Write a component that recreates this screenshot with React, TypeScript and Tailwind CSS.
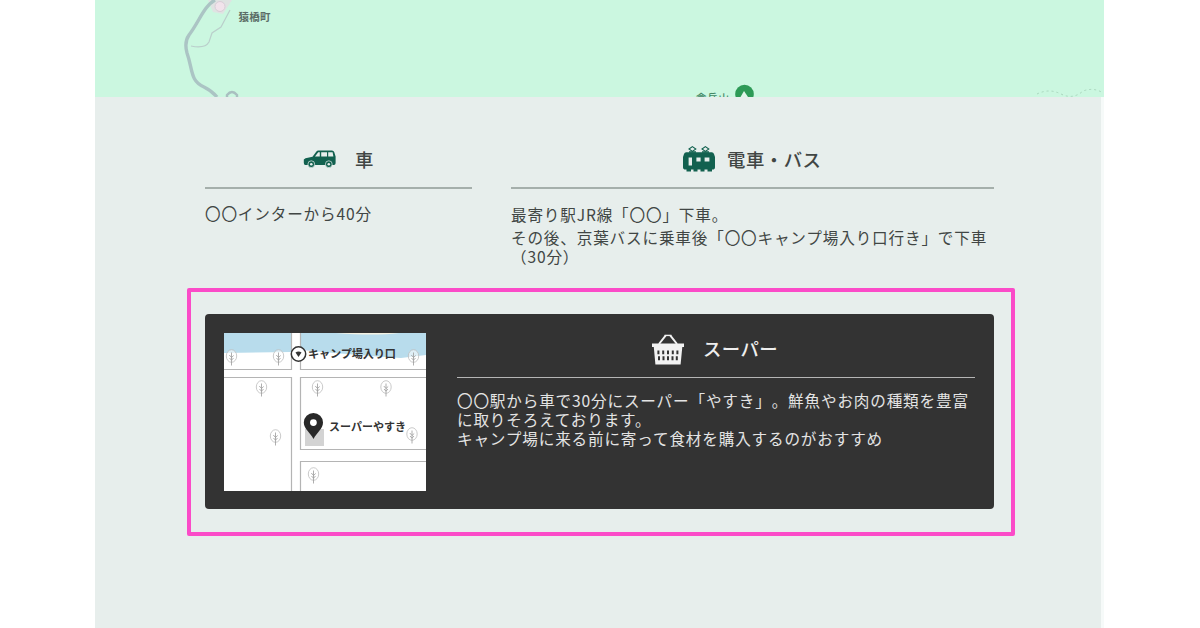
import type { ReactNode } from "react";

const TREES = [
  { x: 7.5, y: 23 },
  { x: 54.5, y: 23 },
  { x: 189.5, y: 23 },
  { x: 37.5, y: 54 },
  { x: 93.5, y: 54 },
  { x: 162, y: 54 },
  { x: 51.5, y: 103 },
  { x: 188, y: 101 },
  { x: 89.5, y: 141 },
];

function CarIcon() {
  return (
    <svg width="34" height="20" viewBox="0 0 34 20" fill="#12614f">
      <path
        fillRule="evenodd"
        d="M.8 10.4 2.5 9.2 9.5 7.8 13.4 2.6Q14 1.4 15.4 1.4H29Q30.6 1.4 31.2 3L32.6 7.5V14.2Q32.4 16 31 16H2.4Q.8 16 .8 13.8ZM12 7.6H16.8V3.2H15.2ZM18.2 7.6H24V3.2H18.2ZM25.2 7.6H30.4L29.6 3.2H25.2Z"
      />
      <circle cx="8.3" cy="15.2" r="3.4" stroke="#e7eeec" strokeWidth=".7" />
      <circle cx="25.8" cy="15.2" r="3.4" stroke="#e7eeec" strokeWidth=".7" />
      <circle cx="8.3" cy="15.2" r="1.3" fill="#e7eeec" />
      <circle cx="25.8" cy="15.2" r="1.3" fill="#e7eeec" />
    </svg>
  );
}

function TrainIcon() {
  return (
    <svg width="34" height="28" viewBox="0 0 34 28" fill="#12614f">
      <path d="M7 4 10.4 1.6 13.8 4 10.4 6.4ZM20 4 23.4 1.6 26.8 4 23.4 6.4Z" fill="none" stroke="#12614f" strokeWidth="1.1" />
      <path d="M7 6.2H14V7.8H7ZM20 6.2H27V7.8H20Z" />
      <path
        fillRule="evenodd"
        d="M4.2 7.2H29.8Q31.4 7.2 32 9L33 12V22.6Q33 24.4 31.6 24.4H2.4Q1 24.4 1 22.6V12L2 9Q2.6 7.2 4.2 7.2ZM6.6 12.5V20.6H10V12.5ZM14.4 12.5V16.6H18.6V12.5ZM22.6 12.5V16.6H27.4V12.5Z"
      />
      <path d="M4.5 24H9V26.6H4.5ZM11.5 24H15.5V26.6H11.5ZM18.5 24H22.5V26.6H18.5ZM25.5 24H30V26.6H25.5Z" />
    </svg>
  );
}

function BasketIcon() {
  return (
    <svg width="34" height="33" viewBox="0 0 34 33">
      <path d="M8 11 14.6 2.7M19.4 2.7 26 11" fill="none" stroke="#f2f2f2" strokeWidth="2" />
      <path d="M13.6 2.4H20.4" stroke="#f2f2f2" strokeWidth="1.4" />
      <path d="M1 10.5H33V14H31.3L29.6 31.5H4.4L2.8 14H1Z" fill="#f2f2f2" />
      <g stroke="#333" strokeWidth="2">
        <path d="M7.4 17.5V21.3M12.2 17.5V21.3M17 17.5V21.3M21.8 17.5V21.3M26.4 17.5V21.3" />
        <path d="M8 23.2V27.3M12.5 23.2V27.3M17 23.2V27.3M21.5 23.2V27.3M25.8 23.2V27.3" />
      </g>
    </svg>
  );
}

function AreaMap() {
  return (
    <svg className="block h-[97px] w-[1009px] bg-[#cbf7e0]" viewBox="0 0 1009 97">
      <path d="M113 0 118 12 128 14 137 0Z" fill="#ead8e3" opacity=".65" />
      <path d="M135 10 126 27 117 33 114 42Q110 49 96 46" fill="none" stroke="#bacfcb" strokeWidth="1.2" />
      <path
        d="M120 0C109 6 104 22 94 35Q89 42 92 53C98 70 95 81 109 87Q117 91 122 97"
        fill="none"
        stroke="#abc4c4"
        strokeWidth="3.4"
      />
      <circle cx="125" cy="6.5" r="5" fill="#f1e3eb" stroke="#d9cdd7" />
      <path d="M132 98V95Q137 89 142 95V98" fill="none" stroke="#a9bfc0" strokeWidth="2.4" />
      <text x="143.5" y="21" fontSize="10.5" fontWeight="700" letterSpacing=".3" fill="#5c6e67">
        猿橋町
      </text>
      <text x="601" y="102" fontSize="10.5" fontWeight="500" letterSpacing=".8" fill="#428866">
        倉岳山
      </text>
      <circle cx="649.5" cy="94" r="9.3" fill="#2d9a56" />
      <path d="M645.5 97 649 91 651 94 653 97Z" fill="#dff5e8" />
      <path d="M942 94Q954 88 966 94T988 91Q999 87 1008 93" fill="none" stroke="#a9d6bd" strokeDasharray="2 3" />
    </svg>
  );
}

function StoreMap() {
  return (
    <svg className="block h-[158px] w-[202px] shrink-0 bg-white tracking-normal" viewBox="0 0 202 158">
      <path d="M0 0H202V22L177 25Q130 22 77 17L67 19 0 20Z" fill="#b8dcec" />
      <path d="M112 0H175Q150 3 112 0Z" fill="#f3f2e4" />
      <path d="M67.5 0H76.5V158H67.5Z" fill="#fff" />
      <g fill="none" stroke="#b4b4b4" strokeWidth="1.2">
        <path d="M67.5 0V36.5H0M76.5 0V36.5H202" />
        <path d="M0 44.5H67.5V158M202 44.5H76.5V116.5H202M202 128.5H76.5V158" />
      </g>
      {TREES.map((t) => (
        <g key={`${t.x}-${t.y}`} transform={`translate(${t.x} ${t.y})`} fill="none" stroke="#a4a4a4" strokeWidth=".8">
          <ellipse cx="0" cy="0" rx="5.2" ry="6.3" fill="#fff" fillOpacity=".55" stroke="#bdbdbd" />
          <path d="M0-3.5V9.5M-2.2-1 0 1.5 2.2-.5M-2 2 0 4.2 2 2" stroke="#9a9a9a" strokeWidth=".8" />
        </g>
      ))}
      <circle cx="74.5" cy="21" r="7.2" fill="#fff" stroke="#333" strokeWidth="1.5" />
      <path d="M71.5 19.5Q74.5 17.5 77.5 19.5L74.5 24Z" fill="#333" />
      <text x="84" y="25.3" fontSize="11.2" fontWeight="700" fill="#333" textLength="88">
        キャンプ場入り口
      </text>
      <rect x="81" y="96" width="19" height="17" fill="#d3d3d3" />
      <path
        fillRule="evenodd"
        d="M89.5 106C86 99 79.8 96 79.8 89.5A9.6 9.6 0 0 1 99 89.5C99 96 93 99 89.5 106ZM89.4 86.2A3.4 3.4 0 1 0 89.4 93A3.4 3.4 0 1 0 89.4 86.2Z"
        fill="#282828"
      />
      <text x="105" y="97.5" fontSize="11" fontWeight="700" fill="#333" textLength="77">
        スーパーやすき
      </text>
    </svg>
  );
}

function AccessColumn({
  icon,
  title,
  className,
  children,
}: {
  icon: ReactNode;
  title: string;
  className: string;
  children: ReactNode;
}) {
  return (
    <section className={className}>
      <h2 className="flex h-[34px] items-center text-[18.4px] font-medium">
        {icon}
        <span className="whitespace-nowrap">{title}</span>
      </h2>
      <div className="mt-[11px] h-[2px] bg-[#a5afab]" />
      {children}
    </section>
  );
}

export default function App() {
  return (
    <main className="h-[628px] w-[1200px] overflow-hidden bg-white pl-[95px] font-['Noto_Sans_CJK_JP',sans-serif] text-[15.6px] leading-[19px] tracking-[0.84px] text-[#414644] [text-spacing-trim:space-all]">
      <AreaMap />
      <div className="h-[531px] w-[1009px] border-r-[3px] border-[#f6faf9] bg-[#e7eeec] pt-[45px] pl-[92px]">
        <div className="flex h-[146px] gap-[39px] pl-[18px]">
          <AccessColumn
            title="車"
            className="w-[267px] [&_h2]:gap-[18px] [&_h2]:pl-[98px]"
            icon={<CarIcon />}
          >
            <p className="mt-[15px] whitespace-nowrap">〇〇インターから40分</p>
          </AccessColumn>
          <AccessColumn
            title="電車・バス"
            className="w-[483px] [&_h2]:gap-[11px] [&_h2]:pl-[171px] [&_h2]:tracking-[0.5px]"
            icon={<TrainIcon />}
          >
            <p className="mt-[16px] whitespace-nowrap">最寄り駅JR線「〇〇」下車。</p>
            <p className="mt-1 whitespace-nowrap">
              その後、京葉バスに乗車後「〇〇キャンプ場入り口行き」で下車
              <br />
              （30分）
            </p>
          </AccessColumn>
        </div>

        <div className="h-[248px] w-[828px] rounded-[2px] border-4 border-[#fb4bc8] px-[14px] pt-[22px]">
          <section className="flex h-[195px] w-[789px] rounded-[4px] bg-[#333] pt-[19px] pl-[19px] text-[#e4e4e4]">
            <StoreMap />
            <div className="ml-[31px] w-[518px]">
              <h2 className="flex h-[33px] items-center gap-[18px] pl-[194px] text-[18.4px] font-medium tracking-[0.4px] text-[#eee]">
                <BasketIcon />
                <span className="-mt-0.5">スーパー</span>
              </h2>
              <div className="mt-[11px] h-px bg-[#b5b5b5]" />
              <p className="mt-[13px] whitespace-nowrap">
                〇〇駅から車で30分にスーパー「やすき」。鮮魚やお肉の種類を豊富
                <br />
                に取りそろえております。
                <br />
                キャンプ場に来る前に寄って食材を購入するのがおすすめ
              </p>
            </div>
          </section>
        </div>
      </div>
    </main>
  );
}
